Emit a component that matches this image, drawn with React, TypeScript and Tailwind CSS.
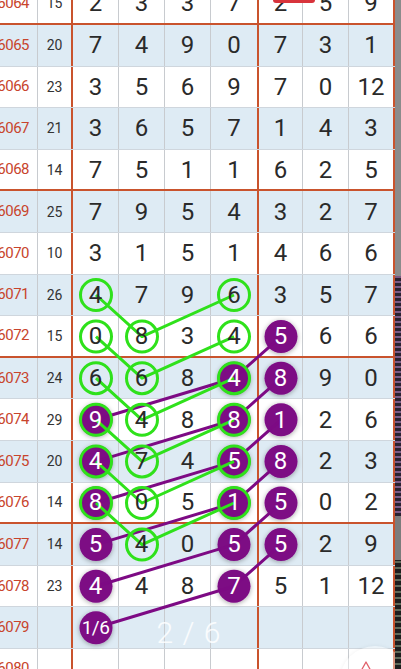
import React from "react";

type Row = { p: string; s: string; d: (number | string)[] };

const rows: Row[] = [
  { p: "6064", s: "15", d: [2, 3, 3, 7, 2, 5, 9] },
  { p: "6065", s: "20", d: [7, 4, 9, 0, 7, 3, 1] },
  { p: "6066", s: "23", d: [3, 5, 6, 9, 7, 0, 12] },
  { p: "6067", s: "21", d: [3, 6, 5, 7, 1, 4, 3] },
  { p: "6068", s: "14", d: [7, 5, 1, 1, 6, 2, 5] },
  { p: "6069", s: "25", d: [7, 9, 5, 4, 3, 2, 7] },
  { p: "6070", s: "10", d: [3, 1, 5, 1, 4, 6, 6] },
  { p: "6071", s: "26", d: [4, 7, 9, 6, 3, 5, 7] },
  { p: "6072", s: "15", d: [0, 8, 3, 4, 5, 6, 6] },
  { p: "6073", s: "24", d: [6, 6, 8, 4, 8, 9, 0] },
  { p: "6074", s: "29", d: [9, 4, 8, 8, 1, 2, 6] },
  { p: "6075", s: "20", d: [4, 7, 4, 5, 8, 2, 3] },
  { p: "6076", s: "14", d: [8, 0, 5, 1, 5, 0, 2] },
  { p: "6077", s: "14", d: [5, 4, 0, 5, 5, 2, 9] },
  { p: "6078", s: "23", d: [4, 4, 8, 7, 5, 1, 12] },
  { p: "6079", s: "", d: ["1/6", "", "", "", "", "", ""] },
  { p: "6080", s: "", d: ["", "", "", "", "", "", ""] },
];

const RH = 41.6;
const purple = new Set<string>([
  "8-4",
  "9-3", "9-4",
  "10-0", "10-3", "10-4",
  "11-0", "11-3", "11-4",
  "12-0", "12-3", "12-4",
  "13-0", "13-3", "13-4",
  "14-0", "14-3",
  "15-0",
]);
const rings: [number, number][] = [
  [7, 0], [7, 3],
  [8, 0], [8, 1], [8, 3],
  [9, 0], [9, 1], [9, 3],
  [10, 0], [10, 1], [10, 3],
  [11, 0], [11, 1], [11, 3],
  [12, 0], [12, 1], [12, 3],
  [13, 1],
];

const cx = (c: number) => 73 + 46 * c + 23 + (c >= 4 ? 1 : 0);
const cy = (r: number) => RH * r + RH / 2;

const greenPaths: string[] = [];
for (let r = 7; r <= 12; r++) {
  greenPaths.push(
    `M${cx(0)} ${cy(r)} L${cx(1)} ${cy(r + 1)} L${cx(3)} ${cy(r)}`
  );
}
const purplePaths: string[] = [];
for (let r = 10; r <= 15; r++) {
  purplePaths.push(
    `M${cx(0)} ${cy(r)} L${cx(3)} ${cy(r - 1)} L${cx(4)} ${cy(r - 2)}`
  );
}

const GREEN = "#2fe11b";
const PURPLE = "#7d0a84";

export default function App() {
  return (
    <div
      className="w-[401px] h-[669px] overflow-hidden flex bg-white relative"
      style={{ fontFamily: "Roboto, 'Noto Sans', sans-serif" }}
    >
      <div className="w-[395px] h-[669px] overflow-hidden relative">
        <div className="relative isolate mt-[-16.6px]">
          {rows.map((row, i) => {
            const blue = i % 2 === 1;
            const redBottom = i % 4 === 0;
            return (
              <div
                key={row.p}
                className={`grid grid-cols-[38px_35px_repeat(7,46px)] h-[41.6px] ${
                  blue ? "bg-[#deebf4]" : "bg-white"
                } ${
                  redBottom
                    ? "border-b-2 border-[#c9532d]"
                    : "border-b border-[#cfd6dd]"
                }`}
              >
                <div className="flex items-center justify-end pr-[8px] overflow-hidden border-r border-[#c8cbcf]">
                  <span className="whitespace-nowrap text-[15px] tracking-[-0.5px] text-[#c8442c] leading-none">
                    {row.p}
                  </span>
                </div>
                <div className="flex items-center justify-center border-r-2 border-[#c9532d]">
                  <span className="text-[14px] text-[#333] leading-none">
                    {row.s}
                  </span>
                </div>
                {row.d.map((v, c) => {
                  const isP = purple.has(`${i}-${c}`);
                  let cls = "border-r border-[#c8cbcf]";
                  if (c === 3) cls = "";
                  if (c === 4) cls = "border-l-2 border-r border-l-[#c9532d] border-r-[#c8cbcf]";
                  if (c === 6) cls = "border-r-2 border-[#c9532d]";
                  return (
                    <div
                      key={c}
                      className={`flex items-center justify-center ${cls}`}
                    >
                      <span
                        className={`relative z-[2] leading-none ${
                          v === "1/6" ? "text-[19px] tracking-[-0.5px]" : "text-[24px]"
                        } ${isP ? "text-white" : "text-[#2a2a2a]"}`}
                      >
                        {v}
                      </span>
                    </div>
                  );
                })}
              </div>
            );
          })}
          <svg
            className="absolute left-0 top-0 z-[1] pointer-events-none"
            width={395}
            height={RH * rows.length}
          >
            <defs>
              <filter id="sh" x="-50%" y="-50%" width="200%" height="200%">
                <feDropShadow dx="0" dy="1" stdDeviation="2.5" floodColor="#000" floodOpacity="0.35" />
              </filter>
            </defs>
            <g filter="url(#sh)">
              {Array.from(purple).map((k) => {
                const [r, c] = k.split("-").map(Number);
                return <circle key={k} cx={cx(c)} cy={cy(r)} r={16.5} fill={PURPLE} />;
              })}
            </g>
            {purplePaths.map((d, i) => (
              <path key={i} d={d} stroke={PURPLE} strokeWidth={3} fill="none" strokeLinejoin="round" />
            ))}
            {greenPaths.map((d, i) => (
              <path key={i} d={d} stroke={GREEN} strokeWidth={3} fill="none" strokeLinejoin="round" />
            ))}
            {rings.map(([r, c]) => (
              <circle
                key={`${r}-${c}`}
                cx={cx(c)}
                cy={cy(r)}
                r={15.5}
                fill="none"
                stroke={GREEN}
                strokeWidth={3}
              />
            ))}
          </svg>
        </div>
        <div className="absolute left-[273px] top-0 w-[42px] h-[3px] rounded-b-[3px] bg-[#d8343c]" />
        <div className="absolute left-[148px] top-[614px] w-[82px] text-center text-[30px] font-light text-white/85 leading-[38px] tracking-[1px]">
          2 / 6
        </div>
        <div className="absolute left-[340px] top-[646px] w-[70px] h-[70px] rounded-full bg-white/40 shadow-[0_0_4px_rgba(0,0,0,0.06)] flex items-start justify-center pt-[12px]">
          <svg width="14" height="14" viewBox="0 0 14 14" className="-ml-[18px]">
            <path d="M2 13 L7 4 L12 13" fill="none" stroke="#e0606a" strokeWidth="1.3" strokeLinejoin="round" />
          </svg>
        </div>
      </div>
      <div className="w-[6px] h-[669px] flex flex-col">
        <div className="h-[276px] bg-[#8b8b8b]" />
        <div className="h-[240px] bg-[repeating-linear-gradient(0deg,#2a2230_0px,#2a2230_3px,#7a5a86_3px,#7a5a86_5px)]" />
        <div className="h-[44px] bg-[#7c7c7c]" />
        <div className="h-[109px] bg-[repeating-linear-gradient(0deg,#1e1e1e_0px,#1e1e1e_4px,#5e6a5a_4px,#5e6a5a_6px)]" />
      </div>
    </div>
  );
}
